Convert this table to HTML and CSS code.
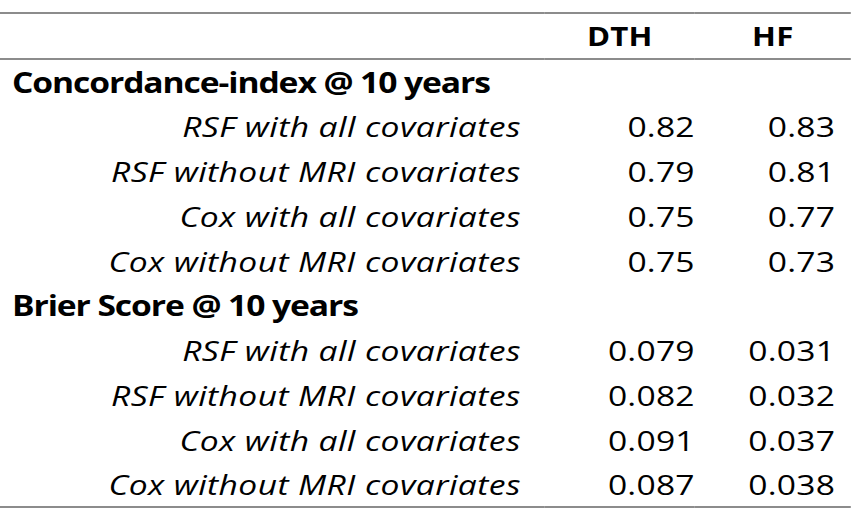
FILE: index.html
```html
<!DOCTYPE html>
<html>
<head>
<meta charset="utf-8">
<link rel="stylesheet" href="styles.css">
</head>
<body>
<table class="results">
  <thead>
    <tr class="head-row">
      <th class="label-col"></th>
      <th class="num-head dth">DTH</th>
      <th class="num-head hf">HF</th>
    </tr>
  </thead>
  <tbody>
    <tr><td class="section" colspan="3">Concordance-index @ 10 years</td></tr>
    <tr><td class="model">RSF with all covariates</td><td class="num">0.82</td><td class="num last">0.83</td></tr>
    <tr><td class="model">RSF without MRI covariates</td><td class="num">0.79</td><td class="num last">0.81</td></tr>
    <tr><td class="model">Cox with all covariates</td><td class="num">0.75</td><td class="num last">0.77</td></tr>
    <tr><td class="model">Cox without MRI covariates</td><td class="num">0.75</td><td class="num last">0.73</td></tr>
    <tr><td class="section" colspan="3">Brier Score @ 10 years</td></tr>
    <tr><td class="model">RSF with all covariates</td><td class="num">0.079</td><td class="num last">0.031</td></tr>
    <tr><td class="model">RSF without MRI covariates</td><td class="num">0.082</td><td class="num last">0.032</td></tr>
    <tr><td class="model">Cox with all covariates</td><td class="num">0.091</td><td class="num last">0.037</td></tr>
    <tr><td class="model">Cox without MRI covariates</td><td class="num">0.087</td><td class="num last">0.038</td></tr>
  </tbody>
</table>
</body>
</html>
```
FILE: styles.css
```css
html, body {
  margin: 0;
  padding: 0;
  background: #ffffff;
}
body {
  padding-top: 12px;
  font-family: "Open Sans", "Liberation Sans", sans-serif;
  color: #000000;
}
/* the source table is rendered with horizontally stretched glyphs */
.results {
  width: 709px;
  border-collapse: collapse;
  table-layout: fixed;
  border-top: 2px solid #8c8c8c;
  border-bottom: 2px solid #8c8c8c;
  transform: scaleX(1.2);
  transform-origin: 0 0;
}
.label-col {
  width: 454px;
}
.head-row th {
  height: 46px;
  padding: 0 0 9px 0;
  border-bottom: 2px solid #8c8c8c;
  vertical-align: bottom;
  box-sizing: border-box;
}
.num-head {
  font-weight: 700;
  font-size: 26px;
  line-height: 1;
  text-align: center;
  letter-spacing: 0.2px;
}
.dth { width: 125px; }
.hf { width: 130px; }
.results tbody tr {
  height: 44.8px;
}
.results td {
  padding: 0;
  font-size: 28px;
  line-height: 1;
  white-space: nowrap;
  vertical-align: middle;
}
.results td.section {
  font-weight: 700;
  padding-left: 10px;
  letter-spacing: -0.9px;
}
.results td.model {
  font-style: italic;
  text-align: right;
  padding-right: 20px;
  letter-spacing: 0.35px;
}
.num {
  text-align: right;
  letter-spacing: 0.2px;
}
.results td.last {
  padding-right: 13px;
}
```
